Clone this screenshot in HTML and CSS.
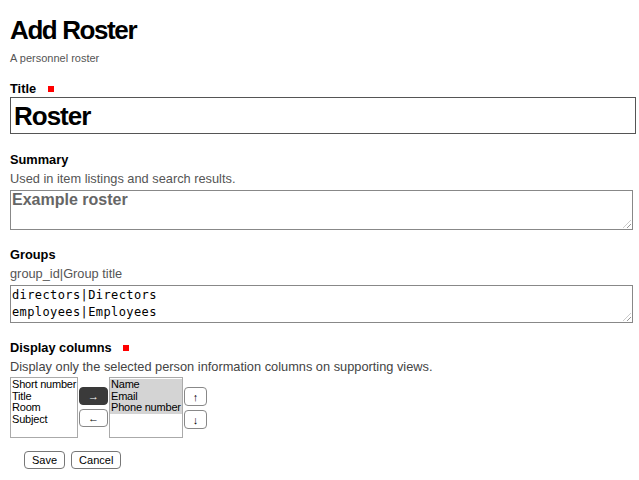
FILE: index.html
```html
<!DOCTYPE html>
<html>
<head>
<meta charset="utf-8">
<link rel="stylesheet" href="styles.css">
</head>
<body>
<h1 class="page-title">Add Roster</h1>
<p class="page-desc">A personnel roster</p>
<form class="form">
  <div class="field">
    <label class="label">Title <span class="req"></span></label>
    <div class="title-input">Roster</div>
  </div>
  <div class="field summary-field">
    <label class="label">Summary</label>
    <div class="help">Used in item listings and search results.</div>
    <div class="textarea summary">Example roster<span class="grip"></span></div>
  </div>
  <div class="field">
    <label class="label">Groups</label>
    <div class="help">group_id|Group title</div>
    <div class="textarea groups">directors|Directors<br>employees|Employees<span class="grip"></span></div>
  </div>
  <div class="field">
    <label class="label">Display columns <span class="req"></span></label>
    <div class="help dark">Display only the selected person information columns on supporting views.</div>
    <div class="chooser">
      <div class="listbox left">
        <div class="opt">Short number</div>
        <div class="opt">Title</div>
        <div class="opt">Room</div>
        <div class="opt">Subject</div>
      </div>
      <div class="btncol">
        <span class="mini dark-btn">→</span>
        <span class="mini">←</span>
      </div>
      <div class="listbox right">
        <div class="opt sel">Name</div>
        <div class="opt sel">Email</div>
        <div class="opt sel">Phone number</div>
      </div>
      <div class="btncol">
        <span class="mini small">↑</span>
        <span class="mini small">↓</span>
      </div>
    </div>
  </div>
  <div class="actions">
    <span class="btn">Save</span>
    <span class="btn">Cancel</span>
  </div>
</form>
</body>
</html>
```

FILE: styles.css
```css
html, body { background: #fff; }
body {
  margin: 0;
  padding: 0 3px 0 10px;
  font-family: "Liberation Sans", Arial, sans-serif;
  color: #000;
}
.page-title {
  margin: 0;
  padding-top: 14px;
  font-size: 26px;
  line-height: 32px;
  font-weight: bold;
  letter-spacing: -1.4px;
}
.page-desc {
  margin: 6px 0 0;
  font-size: 11px;
  line-height: 13px;
  color: #555;
}
.form { margin: 0; }
.field { margin-top: 16px; }
.field + .field { margin-top: 17px; }
.field.summary-field { margin-top: 18px; }
.label {
  display: block;
  font-size: 12.8px;
  line-height: 15px;
  font-weight: bold;
}
.req {
  display: inline-block;
  width: 6px;
  height: 6px;
  background: #f00;
  margin-left: 8px;
  vertical-align: 1px;
}
.title-input {
  margin-top: 1px;
  height: 35px;
  border: 1px solid #555;
  padding: 0 3px;
  font-size: 26px;
  line-height: 36px;
  font-weight: bold;
  letter-spacing: -1px;
  box-sizing: content-box;
}
.help {
  margin-top: 4px;
  font-size: 12.8px;
  line-height: 15px;
  color: #555;
}
.help.dark { color: #444; margin-top: 4px; }
.textarea {
  position: relative;
  margin-top: 4px;
  width: 619px;
  border: 1px solid #888;
  box-sizing: content-box;
}
.summary {
  height: 38px;
  padding: 0 1px;
  font-size: 16px;
  line-height: 18px;
  font-weight: bold;
  color: #666;
}
.groups {
  height: 35px;
  padding: 1px 1px 0;
  font-family: "DejaVu Sans Mono", monospace;
  font-size: 12px;
  line-height: 17px;
  letter-spacing: 0.4px;
  color: #000;
}
.grip {
  position: absolute;
  right: 1px;
  bottom: 1px;
  width: 8px;
  height: 8px;
  background: repeating-linear-gradient(135deg, transparent 0 2px, #999 2px 3px);
  clip-path: polygon(100% 0, 100% 100%, 0 100%);
}
.chooser {
  display: flex;
  align-items: flex-start;
  margin-top: 3px;
}
.listbox {
  height: 58px;
  border: 1px solid #aaa;
  font-size: 11px;
  line-height: 11.6px;
  padding-top: 1px;
  overflow: hidden;
}
.listbox.left { width: 66px; }
.listbox.right { width: 72px; }
.opt { white-space: nowrap; padding-left: 1px; letter-spacing: -0.2px; }
.opt.sel { background: #d4d4d4; }
.btncol {
  display: flex;
  flex-direction: column;
  gap: 4px;
  margin-top: 10px;
  padding: 0 1px;
}
.mini {
  display: flex;
  align-items: center;
  justify-content: center;
  width: 27px;
  height: 16px;
  border: 1px solid #888;
  border-radius: 4px;
  font-size: 11px;
  background: #fff;
}
.mini.small { width: 21px; height: 17px; }
.dark-btn {
  background: #3a3a3a;
  border-color: #3a3a3a;
  color: #fff;
}
.actions {
  display: flex;
  gap: 6px;
  margin-top: 13px;
  padding-left: 14px;
}
.btn {
  display: inline-block;
  padding: 0 7px;
  height: 16px;
  line-height: 16px;
  border: 1px solid #777;
  border-radius: 4px;
  font-size: 11px;
}
```
